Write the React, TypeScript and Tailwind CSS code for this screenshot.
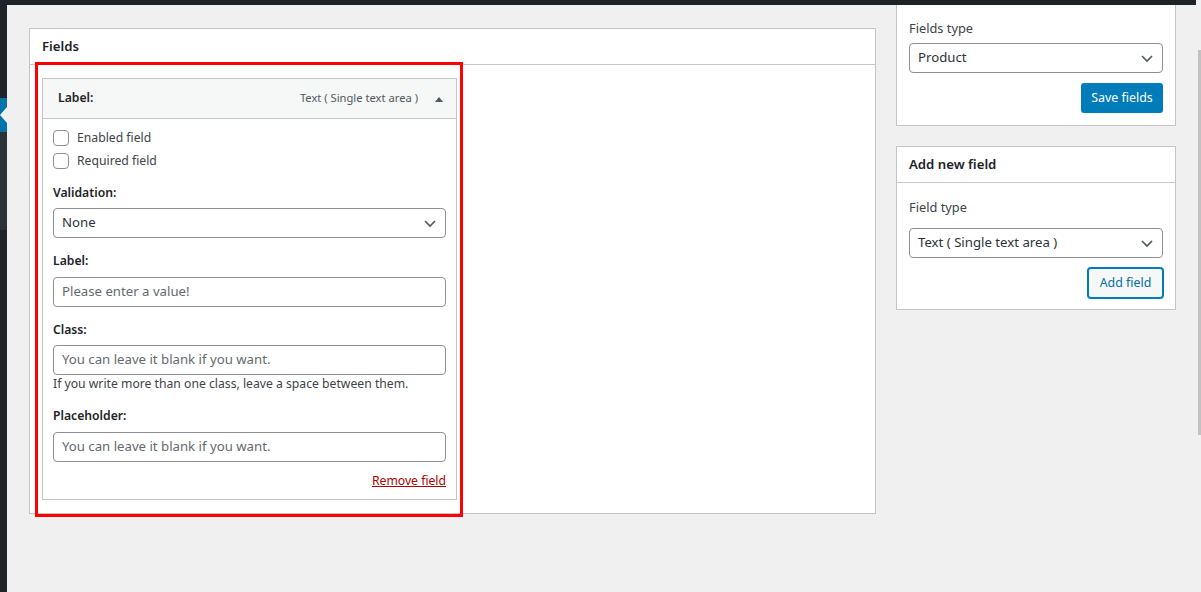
import type { ReactNode } from "react";

// WP admin-style "Fields" editor, with the red annotation box laid over it.

const font = { fontFamily: '"Noto Sans", "Liberation Sans", sans-serif' };

function Chevron() {
  return (
    <svg
      className="pointer-events-none absolute right-[8px] top-1/2 -translate-y-1/2"
      width="14"
      height="14"
      viewBox="0 0 14 14"
      aria-hidden
    >
      <path d="M2 5l5 5 5-5" fill="none" stroke="#50575e" strokeWidth="1.6" />
    </svg>
  );
}

function SelectBox({ value }: { value: string }) {
  return (
    <div className="relative flex h-[30px] items-center rounded-[4px] border border-[#8c8f94] bg-white pl-[8px] text-[13.2px] text-[#2c3338]">
      {value}
      <Chevron />
    </div>
  );
}

function InputBox({ placeholder, className = "" }: { placeholder: string; className?: string }) {
  return (
    <div
      className={
        "flex h-[30px] items-center rounded-[4px] border border-[#8c8f94] bg-white pl-[8px] text-[13.2px] text-[#646970] " +
        className
      }
    >
      {placeholder}
    </div>
  );
}

function FieldLabel({ children, className = "" }: { children: ReactNode; className?: string }) {
  return (
    <div className={"h-[18px] text-[12.2px] font-semibold leading-[18px] text-[#1d2327] " + className}>
      {children}
    </div>
  );
}

function CheckRow({ label }: { label: string }) {
  return (
    <div className="flex h-[16px] items-center gap-[8px]">
      <span className="h-[16px] w-[16px] rounded-[4px] border border-[#8c8f94] bg-white" />
      <span className="text-[12.2px] leading-[16px] text-[#3c434a]">{label}</span>
    </div>
  );
}

function FieldCard() {
  return (
    <div className="w-[415px] border border-[#c3c4c7] bg-white">
      <div className="flex h-[40px] items-center border-b border-[#c3c4c7] bg-[#f6f7f7] pl-[15px] pr-[13px]">
        <span className="text-[12.2px] font-semibold text-[#1d2327]">Label:</span>
        <span className="ml-auto text-[11.2px] text-[#50575e]">Text ( Single text area )</span>
        <svg className="ml-[17px]" width="8" height="6" viewBox="0 0 8 6" aria-hidden>
          <path d="M0 6L4 1l4 5z" fill="#50575e" />
        </svg>
      </div>
      <div className="flex flex-col px-[10px] pb-[9px] pt-[11px]">
        <div className="flex flex-col gap-[7px]">
          <CheckRow label="Enabled field" />
          <CheckRow label="Required field" />
        </div>
        <FieldLabel className="mt-[15px]">Validation:</FieldLabel>
        <div className="mt-[6px]">
          <SelectBox value="None" />
        </div>
        <FieldLabel className="mt-[14px]">Label:</FieldLabel>
        <InputBox className="mt-[7px]" placeholder="Please enter a value!" />
        <FieldLabel className="mt-[14px]">Class:</FieldLabel>
        <InputBox className="mt-[6px]" placeholder="You can leave it blank if you want." />
        <p className="h-[18px] text-[12.2px] leading-[18px] text-[#3c434a]">
          If you write more than one class, leave a space between them.
        </p>
        <FieldLabel className="mt-[14px]">Placeholder:</FieldLabel>
        <InputBox className="mt-[7px]" placeholder="You can leave it blank if you want." />
        <div className="mt-[10px] flex h-[18px] justify-end">
          <a className="text-[12.2px] leading-[18px] text-[#a00] underline">Remove field</a>
        </div>
      </div>
    </div>
  );
}

export default function App() {
  return (
    <div className="flex h-[592px] w-[1201px] overflow-hidden bg-[#f0f0f1]" style={font}>
      {/* admin menu, cut down to its last pixels */}
      <div className="flex w-[7px] shrink-0 flex-col bg-[#1d2327]">
        <div className="h-[98px]" />
        <div className="relative h-[34px] bg-[#0073aa]">
          <svg className="absolute left-0 top-[9px]" width="7" height="16" viewBox="0 0 7 16" aria-hidden>
            <path d="M7 0L0 8l7 8z" fill="#f0f0f1" />
          </svg>
        </div>
        <div className="h-[98px] bg-[#2c3338]" />
      </div>

      <div className="flex min-w-0 flex-1 flex-col">
        <div className="h-[5px] shrink-0 bg-[#1d2327]" />
        <div className="flex items-start pl-[22px]">
          {/* Fields panel */}
          <div className="relative mt-[23px] w-[847px] border border-[#c3c4c7] bg-white">
            <div className="flex h-[36px] items-center border-b border-[#c3c4c7] px-[12px]">
              <h2 className="text-[13.2px] font-semibold text-[#1d2327]">Fields</h2>
            </div>
            <div className="px-[12px] pb-[13px] pt-[13px]">
              <FieldCard />
            </div>
            <div className="pointer-events-none absolute left-[5px] top-[33px] h-[455px] w-[428px] border-[3px] border-[#ff0000]" />
          </div>

          {/* sidebar boxes */}
          <div className="ml-[20px] flex w-[280px] flex-col gap-[20px]">
            <div className="border-x border-b border-[#c3c4c7] bg-white px-[12px] pb-[12px] pt-[14px]">
              <div className="h-[18px] text-[12.8px] leading-[18px] text-[#3c434a]">Fields type</div>
              <div className="mt-[6px]">
                <SelectBox value="Product" />
              </div>
              <div className="mt-[10px] flex justify-end">
                <button className="h-[30px] w-[82px] rounded-[3px] bg-[#007cba] text-[12.4px] text-white">
                  Save fields
                </button>
              </div>
            </div>

            <div className="border border-[#c3c4c7] bg-white">
              <div className="flex h-[36px] items-center border-b border-[#c3c4c7] px-[12px]">
                <h2 className="text-[13.2px] font-semibold text-[#1d2327]">Add new field</h2>
              </div>
              <div className="px-[12px] pb-[11px] pt-[15px]">
                <div className="h-[18px] text-[12.8px] leading-[18px] text-[#3c434a]">Field type</div>
                <div className="mt-[12px]">
                  <SelectBox value="Text ( Single text area )" />
                </div>
                <div className="mt-[10px] flex justify-end">
                  <button className="h-[30px] w-[75px] rounded-[3px] border border-[#007cba] bg-[#f6f7f7] text-[12.4px] text-[#0071a1] shadow-[0_0_0_1px_#007cba]">
                    Add field
                  </button>
                </div>
              </div>
            </div>
          </div>
        </div>
      </div>

      {/* page scrollbar */}
      <div className="relative w-[5px] shrink-0">
        <div className="absolute left-[2px] top-[50px] h-[385px] w-[3px] bg-[#c1c1c1]" />
      </div>
    </div>
  );
}
